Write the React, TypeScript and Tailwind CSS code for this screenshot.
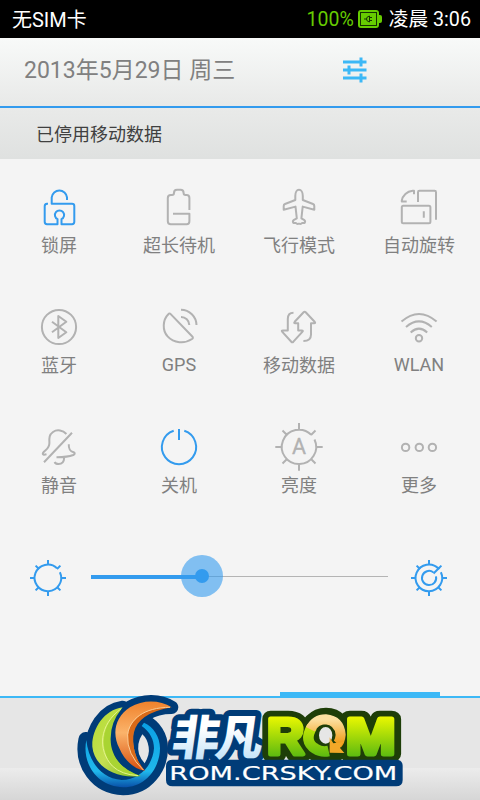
import React from 'react';
import { clsx } from 'clsx';

interface Toggle {
  label: string;
  icon: React.ReactNode;
  active?: boolean;
  latin?: boolean;
}

const toggles: Toggle[] = [
  {
    label: '锁屏',
    active: true,
    icon: (
      <path d="M13 20.8H12Q9.7 21 9.7 23.3V38.8Q9.7 41.2 12 41.2H22.5V36.2A4.6 4.6 0 1 1 26.5 36.2V41.2H37Q39.3 41.2 39.3 38.8V23.1Q39.3 20.8 37 20.8H16.7V14.4A7.7 7.7 0 0 1 32 14.4V17" />
    ),
  },
  {
    label: '超长待机',
    icon: (
      <path d="M34.4 27V15Q34.4 12 31.6 12H30.5Q28.6 12 28.6 10Q28.6 6.8 25.5 6.8H22Q19 6.8 19 10Q19 12 17 12H15.8Q12.8 12 12.8 15V38.3Q12.8 41.2 15.8 41.2H31.6Q34.4 41.2 34.4 38.3V30.8H18" />
    ),
  },
  {
    label: '飞行模式',
    icon: (
      <path d="M24 6.8C21.8 6.8 20.3 9.5 20.3 13V17L10 21Q8.7 21.5 8.7 23V26.7L20.5 23.6L21.8 35.3L19 36.8Q17.2 38.2 18.4 40H21Q22 41.5 24 40.6Q26 41.5 27 40H29.6Q30.8 38.2 29 36.8L26.4 35.3L27.7 23.6L39.3 26.7V23Q39.3 21.5 38 21L27.8 17V13C27.8 9.5 26.2 6.8 24 6.8Z" />
    ),
  },
  {
    label: '自动旋转',
    icon: (
      <>
        <rect x="6.8" y="22.8" width="28.6" height="17.4" rx="1.5" />
        <path d="M28.8 28.3V34.8M23 19V9.2Q23 7.8 24.4 7.8H39.6Q41 7.8 41 9.2V36.7M11.7 18.4H6.8V17.6C7.6 12.4 12 8.3 17.6 7.8H19V11.2" />
      </>
    ),
  },
  {
    label: '蓝牙',
    icon: (
      <>
        <circle cx="24" cy="24" r="17.1" />
        <path d="M17 18.8L31.3 29.3L23.3 35V13L31.3 18.8L17 29.3" />
      </>
    ),
  },
  {
    label: 'GPS',
    latin: true,
    icon: (
      <path d="M15.7 11.1Q14.5 9.8 13.3 11.2C7.5 17 7.2 27.5 12.6 33.4C18.8 40.3 29.5 41 37 36Q38.6 34.8 37.3 33.5ZM26 6.7A15.6 15.6 0 0 1 41.5 22M26 14A8.2 8.2 0 0 1 34.3 22" />
    ),
  },
  {
    label: '移动数据',
    icon: (
      <path d="M18.5 9.7Q12.8 9.7 12.8 16V27.4H8Q6 27.4 7.3 28.9L16.3 38.7Q17.3 39.8 18.4 38.7L27.3 28.9Q28.7 27.4 26.7 27.4H23.2V20.3H20.3Q18.4 20.3 19.7 18.8L28.6 9.3Q29.6 8.2 30.7 9.3L39.6 18.8Q41 20.3 39 20.3H36V31.5Q36 38.1 28.4 38.1" />
    ),
  },
  {
    label: 'WLAN',
    latin: true,
    icon: (
      <>
        <path d="M6.5 18.6Q24 3.4 41.6 18.6M11 24Q24 12.8 36.8 24M15.7 29.5Q24 21.8 32.2 29.5" />
        <circle cx="24" cy="35.2" r="3.2" />
      </>
    ),
  },
  {
    label: '静音',
    icon: (
      <path d="M31.4 11C28 7.3 22.2 6 18 9C13.8 12 14.3 15.5 14.4 20C14.4 26.5 9.2 27.2 8 30Q7 32.4 11.5 31.3M37 9.7L9 39.3M33.8 21.3C33.5 26.5 35 28.1 38.6 29.2Q41 30.5 38.2 32C34.4 33.5 29 34.2 21.5 34.3M29.2 34.5Q29 41 23.5 41Q20.5 41 19.6 39" />
    ),
  },
  {
    label: '关机',
    active: true,
    icon: <path d="M18.7 7.8A17.1 17.1 0 1 0 29.3 7.8M24 6V17" />,
  },
  {
    label: '亮度',
    icon: (
      <>
        <path d="M36.2 11.8A17.2 17.2 0 1 0 39.5 16.5M24 0V6.5M24 41.4V47.7M.3 24H6.8M41.2 24H47.7M7.5 7.5L12 12M36 12L40.5 7.5M7.5 40.5L12 36M36 36L40.5 40.5" />
        <text
          x="24"
          y="31.3"
          textAnchor="middle"
          fontSize="21.5"
          fill="currentColor"
          stroke="currentColor"
          strokeWidth="0.3"
          className="font-[Roboto,sans-serif]"
        >
          A
        </text>
      </>
    ),
  },
  {
    label: '更多',
    icon: (
      <>
        <circle cx="10.6" cy="24.4" r="3.7" />
        <circle cx="24.3" cy="24.4" r="3.7" />
        <circle cx="37.4" cy="24.4" r="3.7" />
      </>
    ),
  },
];

function StatusBar() {
  return (
    <div className="h-[38px] bg-black text-white flex items-center justify-between pl-[12px] pr-[9px] pt-[2px]">
      <span className="text-[20px]">无SIM卡</span>
      <div className="flex items-center">
        <span className="text-[#66cc00] text-[19.5px] mr-[4px]">100%</span>
        <svg width="24" height="18" viewBox="0 0 24 18" className="mr-[7px] mb-[2px]">
          <rect x="1" y="1" width="19" height="16" rx="2" fill="none" stroke="#66cc00" strokeWidth="2" />
          <rect x="3" y="3" width="15" height="12" fill="#66cc00" />
          <path d="M2.5 2.5H18.5V15.5H2.5Z" fill="none" stroke="#143300" strokeWidth="1" />
          <path d="M21 5h1q2 0 2 2v4q0 2-2 2h-1z" fill="#66cc00" />
          <path d="M6 9h3M12 7.5h2M12 10.5h2M11.5 6v6Q8.5 11.5 8.5 9T11.5 6" fill="none" stroke="#143300" strokeWidth="1" />
        </svg>
        <span className="text-[19.7px]">凌晨 3:06</span>
      </div>
    </div>
  );
}

function SunIcon({ full = false }: { full?: boolean }) {
  return (
    <svg width="36" height="36" viewBox="0 0 36 36" fill="none" stroke="#339bee" strokeWidth="2">
      <path d={full ? 'M27.6 8.8A13.3 13.3 0 1 0 29.9 12.2' : 'M27 8.2A13.3 13.3 0 1 0 29.9 12.2'} />
      <path d="M18 0V5M18 31V36M0 18H5M31 18H36M5.6 5.6L9 9M27 9L30.4 5.6M5.6 30.4L9 27M27 27L30.4 30.4" />
      {full && <path d="M22.2 12.2A7.1 7.1 0 1 0 25 16.4M22.5 13.5L28.5 7.5" />}
    </svg>
  );
}

function BrightnessSlider() {
  return (
    <div className="flex items-center px-[30px] h-[44px] mt-[35px]">
      <div className="mt-[4px]">
        <SunIcon />
      </div>
      <div className="relative flex items-center w-[297px] h-[44px] ml-[25px] mr-[23px]">
        <div className="w-full h-px bg-[#b4b4b4]" />
        <div className="absolute left-0 top-[21px] w-[111px] h-[4px] bg-[#339bee]" />
        <div className="absolute left-[90px] top-px size-[42px] rounded-full bg-[#339bee]/60 flex items-center justify-center">
          <div className="size-[14px] rounded-full bg-[#339bee]" />
        </div>
      </div>
      <div className="mt-[4px]">
        <SunIcon full />
      </div>
    </div>
  );
}

const greenLeaf = 'M188 82C130 90 95 150 97 200C102 258 165 298 243 288C190 270 150 235 150 180C150 130 165 105 188 82Z';
const orangeLeaf = 'M335 82C300 60 250 58 210 82C165 112 155 160 178 205C195 245 225 268 255 272C225 240 215 190 220 160C227 112 275 82 335 82Z';
const cyanRing = 'M79 180C65 250 110 319 190 322C260 322 300 260 300 205C300 170 280 140 252 128L245 138C270 155 282 180 282 205C278 260 235 300 185 300C120 295 85 240 79 180Z';

function RomLogo() {
  return (
    <svg width="330" height="108" viewBox="45 36 990 324" className="absolute left-[75px] top-[692px]">
      <defs>
        <linearGradient id="leafGreen" x1="0" y1="0" x2="1" y2="1">
          <stop offset="0" stopColor="#b4dc32" />
          <stop offset="0.5" stopColor="#c4e052" />
          <stop offset="1" stopColor="#7ab81c" />
        </linearGradient>
        <linearGradient id="leafOrange" x1="0" y1="0" x2="0" y2="1">
          <stop offset="0" stopColor="#f0822c" />
          <stop offset="0.45" stopColor="#fbb36a" />
          <stop offset="1" stopColor="#d8500f" />
        </linearGradient>
        <linearGradient id="ring" x1="0" y1="0" x2="0" y2="1">
          <stop offset="0" stopColor="#0aa0e4" />
          <stop offset="0.75" stopColor="#20b8ec" />
          <stop offset="1" stopColor="#0850a8" />
        </linearGradient>
        <linearGradient id="ice" x1="0" y1="0" x2="0" y2="1">
          <stop offset="0.4" stopColor="#ffffff" />
          <stop offset="1" stopColor="#b4dcf6" />
        </linearGradient>
        <linearGradient id="lime" gradientUnits="userSpaceOnUse" x1="0" y1="105" x2="0" y2="230">
          <stop offset="0" stopColor="#f0fa00" />
          <stop offset="1" stopColor="#5cba10" />
        </linearGradient>
        <linearGradient id="gold" x1="0" y1="0" x2="0" y2="1">
          <stop offset="0" stopColor="#fce0a0" />
          <stop offset="1" stopColor="#f09a14" />
        </linearGradient>
      </defs>

      {/* emblem */}
      <g fill="#003c78" stroke="#003c78" strokeWidth="40" strokeLinejoin="round">
        <path d={greenLeaf} />
        <path d={orangeLeaf} />
        <path d={cyanRing} strokeWidth="48" />
      </g>
      <circle cx="185" cy="210" r="98" fill="#003c78" />
      <path d="M247 163Q229 190 237 222Q243 239 254 250Q270 224 266 201Q262 176 247 163Z" fill="#e6e6e6" />
      <path d={cyanRing} fill="url(#ring)" />
      <path d={greenLeaf} fill="url(#leafGreen)" />
      <path d="M185 86C122 130 116 213 160 260Q187 286 238 287C178 267 150 220 152 174Q152 126 185 86Z" fill="#a9d432" />
      <path d="M184 86C117 134 112 209 157 258Q184 284 234 287" fill="none" stroke="#e4f48c" strokeWidth="3" />
      <path d={orangeLeaf} fill="url(#leafOrange)" />
      <path d="M334 82C258 80 210 118 204 164Q198 222 252 271C225 240 216 194 221 160Q233 100 334 82Z" fill="#d96a18" />
      <path d="M330 82C252 82 208 118 203 164Q199 222 250 270" fill="none" stroke="#fbcb94" strokeWidth="3" />

      {/* wordmark */}
      <g
        className="font-['Noto_Sans_CJK_SC',sans-serif] font-black"
        fontSize="142"
        transform="translate(331 224) skewX(-8)"
        strokeLinejoin="round"
      >
        <text textLength="272" fill="#003c78" stroke="#003c78" strokeWidth="36">非凡</text>
        <text textLength="272" fill="url(#ice)">非凡</text>
      </g>

      <g className="font-['Liberation_Sans',sans-serif] font-bold" fontSize="152" strokeLinejoin="round">
        <g fill="#1e3e08" stroke="#1e3e08" strokeWidth="50">
          <text x="622" y="221" textLength="110" lengthAdjust="spacingAndGlyphs">R</text>
          <text x="858" y="221" textLength="148" lengthAdjust="spacingAndGlyphs">M</text>
          <ellipse cx="798" cy="168" rx="58" ry="60" />
        </g>
        <g fill="url(#lime)" stroke="url(#lime)" strokeWidth="15">
          <text x="622" y="221" textLength="110" lengthAdjust="spacingAndGlyphs">R</text>
          <text x="858" y="221" textLength="148" lengthAdjust="spacingAndGlyphs">M</text>
        </g>
      </g>
      <ellipse cx="797" cy="166" rx="24" ry="29" fill="#e6e6e6" stroke="#1e3e08" strokeWidth="8" />
      <path d="M756 140Q730 184 766 206Q784 218 806 213" fill="none" stroke="url(#lime)" strokeWidth="32" />
      <path d="M751 148Q766 118 797 118Q838 122 842 164Q840 184 832 192" fill="none" stroke="url(#gold)" strokeWidth="30" />
      <path d="M809 172L809 218L853 219L840 204L850 186L820 190Z" fill="#f2a828" />

      <path d="M318 258Q318 239 338 239H1008Q1028 239 1028 258V300Q1028 319 1008 319H338Q318 319 318 300Z" fill="#003c78" />
      <text
        x="328"
        y="299"
        textLength="684"
        lengthAdjust="spacingAndGlyphs"
        fontSize="56"
        fill="#fff"
        stroke="#fff"
        strokeWidth="0.5"
        className="font-['DejaVu_Sans',sans-serif]"
      >
        ROM.CRSKY.COM
      </text>
    </svg>
  );
}

export default function App() {
  return (
    <div className="relative w-[480px] h-[800px] overflow-hidden flex flex-col bg-[#f4f4f4] font-[Roboto,'Noto_Sans_CJK_SC',sans-serif]">
      <StatusBar />

      <header className="h-[70px] flex items-center justify-between pl-[24px] pr-[113px] pb-[4px] border-b-2 border-[#339bee] bg-linear-to-b from-[#f8faf9] to-[#e8e9e8]">
        <h1 className="text-[23px] text-[#808080] pt-[2px]">2013年5月29日 周三</h1>
        <svg width="24" height="26" viewBox="0 0 24 26" stroke="#3cb8f6" strokeWidth="3" fill="none">
          <path d="M0 5H23.5M0 13H23.5M0 21H23.5M18 .5V9.5M6 8.5V17.5M18 16.5V25.5" />
        </svg>
      </header>

      <div className="h-[51px] flex items-center pl-[36px] pt-[2px] text-[18px] text-[#404040] bg-linear-to-b from-[#e9eae9] to-[#dfe1e0]">
        已停用移动数据
      </div>

      <div className="grid grid-cols-4 w-[480px] -ml-px">
        {toggles.map((toggle) => (
          <button key={toggle.label} className="h-[120px] pt-[24px] flex flex-col items-center">
            <svg
              width="48"
              height="48"
              viewBox="0 0 48 48"
              fill="none"
              stroke="currentColor"
              strokeWidth="2"
              strokeLinejoin="round"
              className={clsx('shrink-0', toggle.active ? 'text-[#339bee]' : 'text-[#b2b2b2]')}
            >
              {toggle.icon}
            </svg>
            <span
              className={clsx(
                'text-[18px] text-[#808080] whitespace-nowrap',
                toggle.latin ? 'leading-[28px]' : 'leading-[30px]'
              )}
            >
              {toggle.label}
            </span>
          </button>
        ))}
      </div>

      <BrightnessSlider />

      <footer className="mt-auto h-[108px] flex flex-col">
        <div className="h-[6px] flex items-end">
          <div className="w-[280px] h-[2px] bg-[#3cb8f6]" />
          <div className="w-[160px] h-[6px] bg-[#3cb8f6]" />
          <div className="flex-1 h-[2px] bg-[#3cb8f6]" />
        </div>
        <div className="h-[70px] bg-[#e6e6e6]" />
        <div className="h-[32px] bg-linear-to-b from-[#ececec] to-[#d6d6d6]" />
      </footer>

      <RomLogo />
    </div>
  );
}
